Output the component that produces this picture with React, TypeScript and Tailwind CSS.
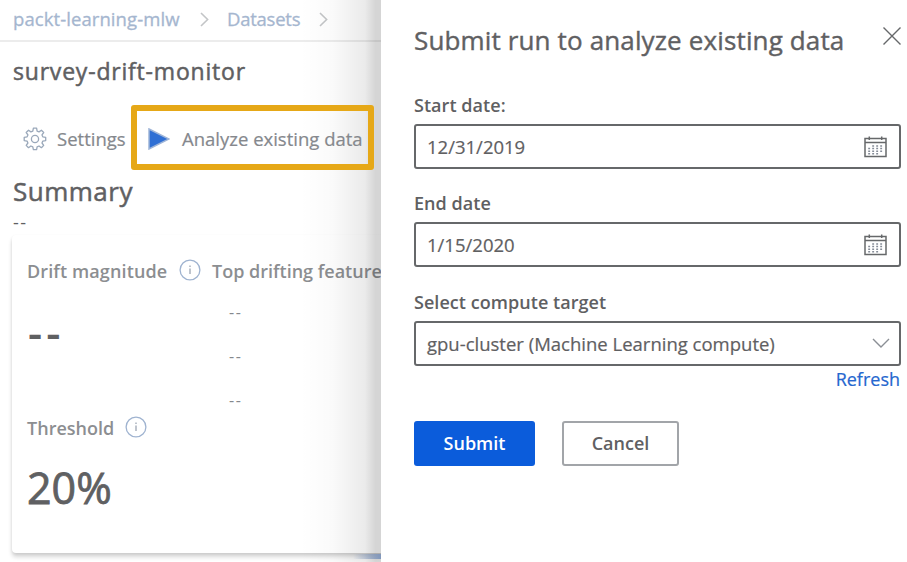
import type { ReactNode } from "react";

function Chevron() {
  return (
    <svg width="9" height="15" viewBox="0 0 9 15" fill="none" stroke="#c3c5c7" strokeWidth="1.6">
      <path d="M1 1l6.6 6.5L1 14" />
    </svg>
  );
}

function Gear() {
  return (
    <svg width="24" height="24" viewBox="0 0 24 24" fill="none" stroke="#9aa8ba" strokeWidth="1.3" strokeLinejoin="round">
      <path d="M10.4 1.2h3.2l.5 2.9 1.9.8 2.4-1.7 2.3 2.3L19 7.9l.8 1.9 2.9.6v3.2l-2.9.5-.8 1.9 1.7 2.4-2.3 2.3-2.4-1.7-1.9.8-.5 2.9h-3.2l-.6-2.9-1.9-.8-2.4 1.7-2.3-2.3L4.9 16l-.8-1.9-2.9-.5v-3.2l2.9-.6.8-1.9-1.7-2.4 2.3-2.3 2.4 1.7 1.9-.8z" />
      <circle cx="12" cy="12" r="3.6" />
    </svg>
  );
}

function Info() {
  return (
    <svg className="mb-[3px]" width="22" height="22" viewBox="0 0 22 22" fill="none" stroke="#9fb3d0" strokeWidth="1.3">
      <circle cx="11" cy="11" r="9.9" />
      <path d="M11 9.4v5.6M11 6.4v1.5" stroke="#a9b1bd" strokeWidth="1.5" />
    </svg>
  );
}

function Calendar() {
  return (
    <svg className="mr-px mt-px" width="23" height="22" viewBox="0 0 23 22" fill="none" stroke="#66686a" strokeWidth="1.5">
      <path d="M1 2.6h21v18H1zM1 6.6h21M5.3 .6v3.4M17.7 .6v3.4" />
      <path d="M8.2 10h11M4.2 12.6h15M4.2 15.2h15M4.2 17.8h11" stroke="#858c97" strokeDasharray="1.9 2.1" />
    </svg>
  );
}

function Field({ label, value, icon }: { label: string; value: ReactNode; icon: ReactNode }) {
  return (
    <div>
      <div className="h-5 text-[18px] leading-5 font-semibold tracking-[0.05px] whitespace-nowrap">{label}</div>
      <div className="mt-[9px] flex h-[45px] items-center justify-between rounded-[3px] border-2 border-[#66686a] pr-[11px] pl-[11px] text-[18.5px]">
        <span className="pt-px [-webkit-text-stroke:0.2px]">{value}</span>
        {icon}
      </div>
    </div>
  );
}

export default function App() {
  return (
    <div className="flex h-[562px] w-[907px] overflow-hidden bg-white font-['Open_Sans','Noto_Sans',sans-serif] text-[#5f6062]">
      <main className="relative w-[381px] shrink-0 overflow-hidden whitespace-nowrap">
        <nav className="flex h-[42px] items-center border-b-2 border-[#ececec] pb-[2px] pl-[13px] text-[18.5px] text-[#a5b6cf] [-webkit-text-stroke:0.3px]">
          <span className="w-[187px] tracking-[0.08px]">packt-learning-mlw</span>
          <Chevron />
          <span className="ml-[18px] w-[92px] tracking-[-0.25px]">Datasets</span>
          <Chevron />
        </nav>
        <h1 className="mt-[13px] h-8 pl-[13px] text-[23px] leading-8 tracking-[0.8px] [-webkit-text-stroke:0.5px]">survey-drift-monitor</h1>
        <div className="mt-[18px] flex h-16 items-center pl-[23px] text-[18.5px] text-[#85888d] [-webkit-text-stroke:0.2px]">
          <span className="mt-1">
            <Gear />
          </span>
          <span className="mt-1 ml-[10px] w-[74px]">Settings</span>
          <button className="relative z-10 flex h-[65px] w-[243px] shrink-0 items-center rounded-[3px] border-6 border-[#e6a817] pt-1 pl-[11px]">
            <svg width="22" height="22" viewBox="0 0 22 22">
              <path d="M1 1l20 10L1 21z" fill="#2f6fd4" stroke="#9fb5d8" strokeWidth="1.5" />
            </svg>
            <span className="ml-3">Analyze existing data</span>
          </button>
        </div>
        <h2 className="mt-1 h-9 pl-[13px] text-[26px] leading-9 tracking-[0.5px] [-webkit-text-stroke:0.5px]">Summary</h2>
        <div className="mt-px h-[25px] pl-[13px] text-[18px] leading-6 tracking-[1.5px]">--</div>
        <section className="ml-3 flex h-[318px] w-[500px] rounded-sm bg-white pl-[15px] shadow-[0_4px_4px_rgba(0,0,0,0.16),0_1px_3px_rgba(0,0,0,0.07)]">
          <div className="w-[185px] shrink-0">
            <div className="mt-[24px] flex h-6 items-center text-[18px] font-semibold text-[#8c8e91]">
              <span className="w-[152px] tracking-[0.12px]">Drift magnitude</span>
              <Info />
            </div>
            <div className="mt-[21px] h-[56px] pl-px text-[44px] leading-[56px] font-semibold tracking-[4px]">--</div>
            <div className="mt-[56px] flex h-6 items-center text-[18px] font-semibold text-[#8c8e91]">
              <span className="w-[98px] tracking-[0.02px]">Threshold</span>
              <Info />
            </div>
            <div className="mt-[18px] h-[60px] text-[43px] leading-[60px] [-webkit-text-stroke:0.8px]">20%</div>
          </div>
          <div>
            <div className="mt-[24px] h-6 text-[18px] leading-6 font-semibold text-[#8c8e91]">Top drifting feature</div>
            <div className="mt-[17px] ml-[17px] flex flex-col gap-5 text-[16px] leading-6 tracking-[1.7px] text-[#85888d]">
              <span>--</span>
              <span>--</span>
              <span>--</span>
            </div>
          </div>
        </section>
        <div className="pointer-events-none absolute inset-y-0 right-0 w-[81px] bg-[linear-gradient(to_right,transparent,rgba(0,0,0,0.02)_40%,rgba(0,0,0,0.065)_70%,rgba(0,0,0,0.08)_80%,rgba(0,0,0,0.165)_93%)]" />
        <div className="absolute right-0 bottom-[3px] h-[5px] w-[28px] bg-linear-to-r from-transparent to-[#8197bb]" />
      </main>
      <aside className="flex-1 pr-[6px] pl-[33px] whitespace-nowrap">
        <header className="flex items-start justify-between pt-[20px]">
          <h2 className="h-10 text-[26px] leading-10 tracking-[0.14px] [-webkit-text-stroke:0.4px]">Submit run to analyze existing data</h2>
          <svg className="mt-[7px]" width="18" height="18" viewBox="0 0 18 18" stroke="#66686a" strokeWidth="1.4">
            <path d="M.5.5l17 17M17.5.5l-17 17" />
          </svg>
        </header>
        <div className="mt-[34.8px] flex flex-col gap-[24.5px]">
          <Field label="Start date:" value="12/31/2019" icon={<Calendar />} />
          <Field label="End date" value="1/15/2020" icon={<Calendar />} />
          <Field
            label="Select compute target"
            value="gpu-cluster (Machine Learning compute)"
            icon={
              <svg className="-mr-[2px]" width="18" height="11" viewBox="0 0 18 11" fill="none" stroke="#8b8f95" strokeWidth="1.4">
                <path d="M1 1l8 8 8-8" />
              </svg>
            }
          />
        </div>
        <div className="mt-px h-6 pr-px text-right text-[18px] leading-6 text-[#2567cf] [-webkit-text-stroke:0.2px]">Refresh</div>
        <div className="mt-[30px] flex gap-[27px] text-[18px] font-semibold">
          <button className="h-[45px] w-[121px] rounded-[3px] bg-[#0b5cdb] text-white">Submit</button>
          <button className="h-[45px] w-[117px] rounded-[3px] border-2 border-[#a2a5a9]">Cancel</button>
        </div>
      </aside>
    </div>
  );
}
